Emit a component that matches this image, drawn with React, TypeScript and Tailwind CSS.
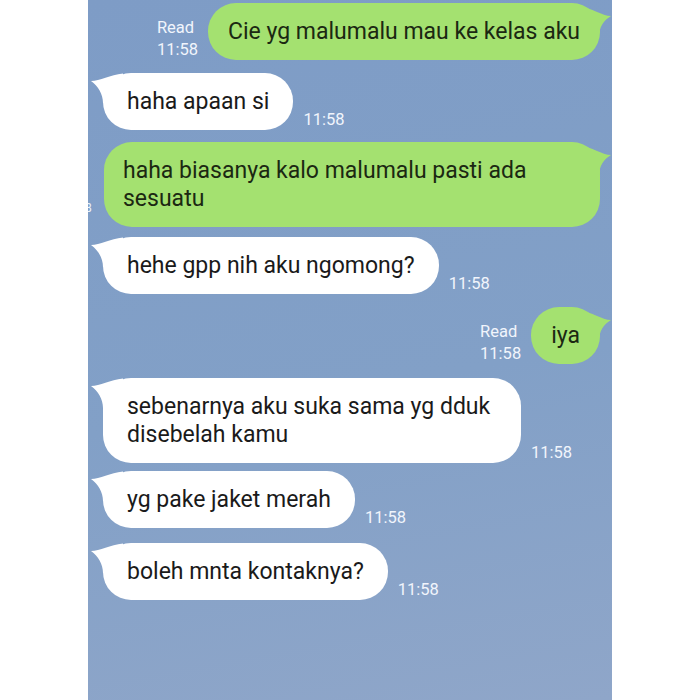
import React from "react";

const font = { fontFamily: "Roboto, 'Noto Sans', 'Liberation Sans', sans-serif" };

function TailLeft() {
  return (
    <svg
      className="absolute left-[-13px] top-0"
      width="40"
      height="32"
      viewBox="0 0 40 32"
      fill="#ffffff"
    >
      <path d="M1 8 C 10 8, 20 2, 33 0.5 L 33 30 L 13 30 C 13 21, 8 13, 1 8 Z" />
    </svg>
  );
}

function TailRight() {
  return (
    <svg
      className="absolute right-[-12px] top-[2px]"
      width="40"
      height="34"
      viewBox="0 0 40 34"
      fill="#a4e170"
    >
      <path d="M39 11 C 30 11, 20 3, 7 1 L 7 32 L 27 32 C 27 22, 32 15, 39 11 Z" />
    </svg>
  );
}

function Meta({ read }: { read?: boolean }) {
  return (
    <div className="flex flex-col text-[16.5px] leading-[22px] text-[#f1f5fc]">
      {read && <span>Read</span>}
      <span>11:58</span>
    </div>
  );
}

function Outgoing({
  lines,
  className,
  width,
}: {
  lines: string[];
  className: string;
  width?: string;
}) {
  return (
    <div className={"flex justify-end items-end pr-[12px] " + className}>
      {!width && (
        <div className="mr-[10px] mb-[-1px]">
          <Meta read />
        </div>
      )}
      <div
        className={
          "relative bg-[#a4e170] rounded-[28px] px-[20px] py-[14.5px] text-[23px] leading-[28px] text-[#1b2812] " +
          (width ?? "")
        }
      >
        <TailRight />
        <div className="relative">
          {lines.map((l, i) => (
            <div key={i} className="whitespace-nowrap">
              {l}
            </div>
          ))}
        </div>
      </div>
    </div>
  );
}

function Incoming({
  lines,
  className,
  width,
}: {
  lines: string[];
  className: string;
  width?: string;
}) {
  return (
    <div className={"flex items-end pl-[15px] " + className}>
      <div
        className={
          "relative bg-white rounded-[28px] px-[24px] py-[14.5px] text-[23px] leading-[28px] text-[#1a1a1a] " +
          (width ?? "")
        }
      >
        <TailLeft />
        <div className="relative">
          {lines.map((l, i) => (
            <div key={i} className="whitespace-nowrap">
              {l}
            </div>
          ))}
        </div>
      </div>
      <div className="ml-[10px] mb-[-1px]">
        <Meta />
      </div>
    </div>
  );
}

export default function App() {
  return (
    <div className="w-[700px] h-[700px] bg-white overflow-hidden" style={font}>
      <div className="relative ml-[88px] w-[524px] h-[700px] overflow-hidden bg-[linear-gradient(170deg,#7e9cc6_0%,#82a0c7_55%,#8fa6c9_100%)] flex flex-col pt-[3px]">
        <span className="absolute left-[-3px] top-[201px] text-[12px] leading-[14px] text-[#eef3fb]">
          8
        </span>
        <Outgoing lines={["Cie yg malumalu mau ke kelas aku"]} className="" />
        <Incoming lines={["haha apaan si"]} className="mt-[13px]" />
        <Outgoing
          lines={["haha biasanya kalo malumalu pasti ada", "sesuatu"]}
          className="mt-[12px]"
          width="w-[496px] pl-[19px]"
        />
        <Incoming lines={["hehe gpp nih aku ngomong?"]} className="mt-[10px]" />
        <Outgoing lines={["iya"]} className="mt-[13px]" />
        <Incoming
          lines={["sebenarnya aku suka sama yg dduk", "disebelah kamu"]}
          className="mt-[14px]"
          width="w-[418px]"
        />
        <Incoming lines={["yg pake jaket merah"]} className="mt-[8px]" />
        <Incoming lines={["boleh mnta kontaknya?"]} className="mt-[15px]" />
      </div>
    </div>
  );
}
